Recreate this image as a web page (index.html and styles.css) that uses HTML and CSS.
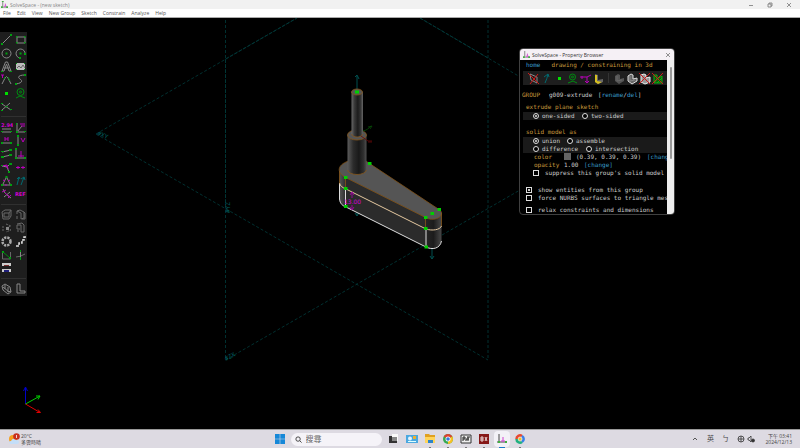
FILE: index.html
```html
<!DOCTYPE html>
<html lang="zh-Hant">
<head>
<meta charset="utf-8">
<title>SolveSpace - (new sketch)</title>
<link rel="stylesheet" href="styles.css">
</head>
<body>
<header class="titlebar">
  <svg class="logo" viewBox="0 0 8 8"><path d="M2 0v6.500M1 7h6" stroke="#777"/><path d="M5 3v3M3.500 6h3" stroke="#d040d0"/><path d="M0 6h2v2H0zM6 6h2v2H6zM1 0h2v1H1z" fill="#40b040"/></svg>
  <span class="caption">SolveSpace - (new sketch)</span>
  <div class="winbtns">
    <button aria-label="Minimize"><svg viewBox="0 0 6 6"><path d="M1 3.500h4"/></svg></button>
    <button aria-label="Restore"><svg viewBox="0 0 6 6"><path d="M1 2h3v3H1zM2 2V1h3v3H4"/></svg></button>
    <button aria-label="Close"><svg viewBox="0 0 6 6"><path d="M1 1l4 4M5 1L1 5"/></svg></button>
  </div>
</header>
<nav class="menubar">
  <button>File</button><button>Edit</button><button>View</button><button>New Group</button><button>Sketch</button><button>Constrain</button><button>Analyze</button><button>Help</button>
</nav>

<main class="workspace">
  <svg class="model" viewBox="0 18 800 411" preserveAspectRatio="xMinYMin meet">
    <defs>
      <linearGradient id="rod"><stop offset="0" stop-color="#686868"/><stop offset=".25" stop-color="#3a3a3a"/><stop offset=".55" stop-color="#1c1c1c"/><stop offset=".8" stop-color="#353535"/><stop offset="1" stop-color="#666"/></linearGradient>
      <linearGradient id="post"><stop offset="0" stop-color="#5c5c5c"/><stop offset=".3" stop-color="#2c2c2c"/><stop offset=".6" stop-color="#191919"/><stop offset=".85" stop-color="#303030"/><stop offset="1" stop-color="#505050"/></linearGradient>
      <linearGradient id="end"><stop offset="0" stop-color="#262626"/><stop offset=".5" stop-color="#1c1c1c"/><stop offset="1" stop-color="#484848"/></linearGradient>
      <linearGradient id="heel"><stop offset="0" stop-color="#555"/><stop offset="1" stop-color="#2c2c2c"/></linearGradient>
    </defs>
    <g class="plane">
      <path d="M96 134L297 18M96 134L488 360M225.500 360L617 134M420 18L617 134M225.500 20V360M488 20V360"/>
      <path class="dense" d="M225.500 59V205M225.500 59L297 18M420 18L488 58"/>
    </g>
    <g class="planename">
      <text x="97" y="135" transform="rotate(22 97 135)">#XY</text>
      <text x="230" y="213" transform="rotate(-90 230 213)">#YZ</text>
      <text x="226" y="361" transform="rotate(-28 226 361)">#ZX</text>
    </g>
    <g class="normal"><path d="M357 90V76M355 77l2-2 2 4M357 205v11M355 213l2 3 2-3M432 247v12M430 256l2 3 2-3"/></g>
    <path fill="url(#heel)" d="M339.500 170V199C340 204 343 206 346 207V177Z"/>
    <path fill="#2b2b2b" d="M345.500 177L426 217V247L345.500 207Z"/>
    <path fill="url(#end)" d="M425.500 216L441.500 212V241C440 249 432 250 425.500 247Z"/>
    <path fill="#555" stroke="#805014" stroke-width=".8" d="M345.500 177.500C337 173 337 166 346 162C354 158 364 159 369.500 163.500L439 209.500C443 212 442 216 438 218C434 220 429 219.500 425.500 217.500Z"/>
    <path class="edge" d="M339.500 171V184M345.500 178V188M425.500 218V229M441.500 213V226"/>
    <path class="sel" d="M339.500 184V199C340 204 343 206 346 207L426 247C432 250 440 249 441.500 241M345.500 189V206M426 229V247"/>
    <path class="mid" d="M339.500 183C340 186 343 188 346 189L426 229C432 231 440 230 441.500 226"/>
    <path fill="url(#post)" d="M347.500 135V170C349 176 365 176 366.500 170V135Z"/>
    <path class="edge" d="M347.500 170C349 176 365 176 366.500 170"/>
    <ellipse cx="357" cy="135" rx="9.500" ry="5" fill="#555" stroke="#87571b" stroke-width=".8"/>
    <path fill="url(#rod)" d="M351.500 92V134C353 138 361 138 363 134V92Z"/>
    <path class="edge" d="M351.500 134C353 138 361 138 363 134"/>
    <ellipse cx="357" cy="92" rx="5.500" ry="3" fill="#555" stroke="#87571b" stroke-width=".8"/>
    <path d="M363 131c4-1 5-2 8-5M368 127l4-1-2 3" fill="none" stroke="#064d06" stroke-width=".8"/>
    <path d="M361 136l7 5h4M368 142h4" fill="none" stroke="#680808" stroke-width=".8"/>
    <g class="dim"><path d="M352 198v-6M350 195l2-3 2 3M352 205v5M350 207l2 3 2-3"/><text x="344" y="204">13.00</text></g>
    <path class="point" d="M355 90.500h4v3h-4zM368 162h3.500v3H368zM344 176h3.500v3H344zM344 187h3.500v3H344zM344 205h3.500v3H344zM437.500 208h3.500v3h-3.500zM430.500 212h3.500v3h-3.500zM424 216h3.500v3H424zM424 227h3.500v3H424zM424.500 245.500h3.500v3h-3.500z"/>
    <g class="axes">
      <path stroke="#0000c8" d="M25.500 404V388M23.500 391l2-4 2 4"/>
      <path stroke="#00d000" d="M25.500 404L40 396M36 396l4 0-2 3.500"/>
      <path stroke="#e00000" d="M25.500 404L40 412.500M38 409.500l2.500 3h-4"/>
    </g>
  </svg>

  <aside class="toolbar">
    <div class="tools six">
      <button aria-label="Line"><svg viewBox="0 0 13 13"><path class="w" d="M2 11L11 2"/><path class="gf" d="M1 10h2v2H1zM10 1h2v2h-2z"/></svg></button>
      <button aria-label="Rectangle"><svg viewBox="0 0 13 13"><path class="w" d="M3 4h8v6H3z"/><path class="gf" d="M2 3h1.500v1.500H2zM10 3h1.500v1.500H10zM2 9h1.500v1.500H2zM10 9h1.500v1.500H10z"/></svg></button>
      <button aria-label="Circle"><svg viewBox="0 0 13 13"><circle class="w" cx="6.500" cy="6.500" r="4.500"/><path class="gf" d="M5.500 5.500h2v2h-2z"/></svg></button>
      <button aria-label="Arc"><svg viewBox="0 0 13 13"><path class="w" d="M6.500 11A4.500 4.500 0 1 1 11 7"/><path class="gf" d="M5.500 5.500h2v2h-2zM10 6h2v2h-2zM5 10h2v2H5z"/></svg></button>
      <button aria-label="Text"><svg viewBox="0 0 13 13"><path class="w" d="M2 11L5.500 2h2L11 11H9L6.500 4 4 11zM4 8h5"/><path class="gf" d="M1 11h2v1H1zM10 11h2v1h-2z"/></svg></button>
      <button aria-label="Image"><svg viewBox="0 0 13 13"><path fill="#bbb" d="M2 3h9v7H2z"/><path d="M3 8l2-2 2 2 2-3 2 3" fill="none" stroke="#666"/><path class="gf" d="M2 3h1v1H2zM10 3h1v1h-1zM2 9h1v1H2zM10 9h1v1h-1z"/></svg></button>
      <button aria-label="Tangent arc"><svg viewBox="0 0 13 13"><path class="w" d="M2 11L5 5q1.500-3 3 0l3 6"/><path class="g" d="M4 6l1-2M8 4l2 4"/><path class="m" d="M1 2h3M2.500 2v3"/></svg></button>
      <button aria-label="Bezier"><svg viewBox="0 0 13 13"><path class="w" d="M11 2C5 2 3 4 6 6s2 4-4 5"/><path class="gf" d="M10 1h2v2h-2zM1 10h2v2H1z"/></svg></button>
      <button aria-label="Point"><svg viewBox="0 0 13 13"><path fill="#00e000" d="M5 5h3v3H5z"/></svg></button>
      <button aria-label="Construction"><svg viewBox="0 0 13 13"><circle class="g" cx="6.500" cy="5" r="3.500"/><circle class="g" cx="6.500" cy="5" r="1"/><path class="g" d="M2 11l4-2 5 2"/></svg></button>
      <button aria-label="Split"><svg viewBox="0 0 13 13"><path class="w" d="M2 4l9 6M2 10l8-7"/><path class="gf" d="M1 3h2v1H1zM1 10h2v1H1zM10 9h2v1h-2zM5.500 6h2v1h-2z"/></svg></button>
    </div>
    <hr>
    <div class="tools six">
      <button aria-label="Distance"><svg viewBox="0 0 13 13"><text x="1" y="6">2.94</text><path class="w" d="M2 8h9M2 11h9"/><path class="gf" d="M1 10h2v1H1zM10 10h2v1h-2z"/></svg></button>
      <button aria-label="Angle"><svg viewBox="0 0 13 13"><path class="w" d="M3 2v9h8M3 11l5-6"/><path class="m" d="M6 3h5M7 5h4"/><path class="gf" d="M2 2h1v2H2zM2 10h2v2H2zM10 10h2v1h-2z"/></svg></button>
      <button aria-label="Horizontal"><svg viewBox="0 0 13 13"><path class="w" d="M2 9h9"/><path class="m" d="M5 3v4M8 3v4M5 5h3"/><path class="gf" d="M1 8h2v2H1zM10 8h2v2h-2z"/></svg></button>
      <button aria-label="Vertical"><svg viewBox="0 0 13 13"><path class="w" d="M4 2v9"/><path class="m" d="M7 4l2 4 2-4"/><path class="gf" d="M3 1h2v2H3zM3 10h2v2H3z"/></svg></button>
      <button aria-label="Parallel"><svg viewBox="0 0 13 13"><path class="w" d="M2 5l9-2M2 10l9-2"/><path class="gf" d="M1 4h3v1H1zM9 2h3v2H9zM1 9h3v2H1zM9 7h3v2H9z"/></svg></button>
      <button aria-label="Perpendicular"><svg viewBox="0 0 13 13"><path class="w" d="M2 1v10h9"/><path class="m" d="M7 4v6M4 9h6"/><path class="gf" d="M1 1h2v2H1zM1 10h2v2H1zM10 10h2v2h-2z"/></svg></button>
      <button aria-label="Point on line"><svg viewBox="0 0 13 13"><path class="w" d="M2 5l5 1 4-4M7 6l2 5"/><path class="m" d="M2 5l5-1 1 4M5 4l3 3"/><path class="gf" d="M9 2h3v2H9zM8 10h2v2H8zM1 4h2v1H1z"/></svg></button>
      <button aria-label="Symmetric"><svg viewBox="0 0 13 13"><path class="m" d="M2 6.500h4M7 6.500h4M4 5v3M9 5v3"/></svg></button>
      <button aria-label="Equal"><svg viewBox="0 0 13 13"><path class="w" d="M6.500 3l4 8h-8z"/><path class="m" d="M3 6l2 1M8 7l2-1M6 10v2"/><path class="gf" d="M5.500 2h2v2h-2zM1 10h2v2H1zM10 10h2v2h-2z"/></svg></button>
      <button aria-label="Orientation"><svg viewBox="0 0 13 13"><path class="t" d="M3 11l2-8-2 2M5 3l1 2M7 11l3-8-3 2M10 3l1 3"/></svg></button>
      <button aria-label="Other side"><svg viewBox="0 0 13 13"><path class="w" d="M3 2l2 4M4 10l6-5M7 8l4 3"/><path class="m" d="M2 5l4-2M5 6l5 4M8 11l3-3"/></svg></button>
      <button aria-label="Reference"><svg viewBox="0 0 13 13"><text x="1" y="9">REF</text></svg></button>
    </div>
    <hr>
    <div class="tools five">
      <button aria-label="Extrude"><svg viewBox="0 0 13 13"><path class="d" d="M2 4l3-2h6v6l-2 3H3zM4 5h5v4H4zM9 5l2-3"/></svg></button>
      <button aria-label="Lathe"><svg viewBox="0 0 13 13"><path class="d" d="M3 3l3-1 4 2v6l-3 1V5L3 3v3M3 8v3M10 4l1 1v6H8"/></svg></button>
      <button aria-label="Helix"><svg viewBox="0 0 13 13"><path class="d" d="M6 3l5 2-5 2 5 2-5 2M2 6h3M2 9h2" stroke-dasharray="2 1"/><path fill="#888" d="M6 6h3v3H6z"/></svg></button>
      <button aria-label="Revolve"><svg viewBox="0 0 13 13"><path class="d" d="M3 3l5-1 2 2v7H7V4H3v4h3M3 10h2"/></svg></button>
      <button aria-label="Step rotating"><svg viewBox="0 0 13 13"><circle cx="6.500" cy="6.500" r="4" fill="none" stroke="#aaa" stroke-width="2.500" stroke-dasharray="2.200 1"/></svg></button>
      <button aria-label="Step translating"><svg viewBox="0 0 13 13"><path d="M2 11h3V8h3V5h2V2h2" fill="none" stroke="#ddd" stroke-width="1.500" stroke-dasharray="3 1"/></svg></button>
      <button aria-label="Sketch in plane"><svg viewBox="0 0 13 13"><path class="d" d="M2.500 3v8h8V4"/><path class="g" d="M3 4l7 6"/><path class="gf" d="M2 3h2v2H2zM9 9h2v2H9z"/></svg></button>
      <button aria-label="Sketch in 3D"><svg viewBox="0 0 13 13"><path class="d" d="M2 9q4 0 9-3"/><path class="w" d="M6.500 2v9"/><path class="gf" d="M6 2h1v2H6zM6 9h1v3H6z"/></svg></button>
      <button aria-label="Assemble"><svg viewBox="0 0 13 13"><path fill="#ccc" d="M2 2h9v3H2zM2 8h9v3H2z"/><path fill="#7a3030" d="M4 4h5v1H4z"/><path fill="#20207a" d="M4 9h5v2H4z"/></svg></button>
    </div>
    <hr>
    <div class="tools one">
      <button aria-label="Nearest isometric"><svg viewBox="0 0 13 13"><path class="w" d="M2 4l3-2 5 3 1 5-3 2-5-4zM3 5l6 5M5 3v4M8 5v5l3-1"/></svg></button>
      <button aria-label="Nearest orthographic"><svg viewBox="0 0 13 13"><path class="w" d="M3 2h3v7h5v2H3z"/></svg></button>
    </div>
  </aside>

  <section class="browser">
    <div class="browser-title">
      <svg class="logo" viewBox="0 0 8 8"><path d="M2 0v6.500M1 7h6" stroke="#777"/><path d="M5 3v3M3.500 6h3" stroke="#d040d0"/><path d="M0 6h2v2H0zM6 6h2v2H6z" fill="#40b040"/></svg>
      <span>SolveSpace - Property Browser</span>
      <button aria-label="Close browser"><svg viewBox="0 0 6 6"><path d="M1 1l4 4M5 1L1 5"/></svg></button>
    </div>
    <div class="browser-body">
      <form class="page">
        <div class="row top"><a href="#home">home</a><span class="y">drawing / constraining in 3d</span></div>
        <div class="strip">
          <button type="button" aria-label="Planes"><svg viewBox="0 0 13 13"><path class="w" d="M3 2l7 3v6L4 8z"/><path class="r" d="M1 1l11 11M11 2L3 12"/></svg></button>
          <button type="button" aria-label="Normals"><svg viewBox="0 0 13 13"><path class="t" d="M5 11q2-4 3-9L4 5M8 2l1 3"/></svg></button>
          <button type="button" aria-label="Points"><svg viewBox="0 0 13 13"><path fill="#00e000" d="M5 5h3v3H5z"/></svg></button>
          <button type="button" aria-label="Construction entities"><svg viewBox="0 0 13 13"><circle class="g" cx="6.500" cy="5" r="3"/><circle class="g" cx="6.500" cy="5" r="1"/><path class="g" d="M2 11l5-2 4 2"/></svg></button>
          <button type="button" aria-label="Constraints"><svg viewBox="0 0 13 13"><path class="m" d="M1 5h7l4-2M3 4v3M8 5v6M6 9l2 2 2-2"/></svg></button>
          <button type="button" aria-label="Faces"><svg viewBox="0 0 13 13"><path fill="#666" d="M3 2l3 1v5l5-1v3l-5 2-3-2z"/><path fill="#d8c020" d="M3 3h2v6l5 1-4 2-3-2z"/></svg></button>
          <i></i>
          <button type="button" aria-label="Shaded"><svg viewBox="0 0 13 13"><path fill="#555" d="M3 4l3-2 2 1v4l4-1v3l-5 3-4-3z"/><path class="d" d="M5 4v5l5-1"/></svg></button>
          <button type="button" aria-label="Edges"><svg viewBox="0 0 13 13"><path fill="#666" stroke="#ddd" d="M3 4l3-2 2 1v4l4-1v3l-5 3-4-3z"/><path class="w" d="M5 4v5l5-1"/></svg></button>
          <button type="button" aria-label="Outlines"><svg viewBox="0 0 13 13"><path fill="#999" stroke="#eee" d="M3 3l3-1 2 1v3l4-1v5l-5 2-4-2z"/><path class="r" d="M1 1l11 11M12 1L1 12"/></svg></button>
          <button type="button" aria-label="Mesh"><svg viewBox="0 0 13 13"><path fill="#0a5a0a" stroke="#10b010" d="M3 3h3v4l5-3v7H3zM3 11l4-5M6 11l5-5"/><path class="r" d="M1 1l11 11M12 1L1 12"/></svg></button>
        </div>
        <div class="row group"><span class="y key">GROUP</span><span class="name">g009-extrude</span><span>[<a href="#rename">rename</a>/<a href="#del">del</a>]</span></div>
        <div class="row head first">extrude plane sketch</div>
        <div class="row band sides"><label><input type="radio" name="sides" checked>one-sided</label><label><input type="radio" name="sides">two-sided</label></div>
        <div class="row head">solid model as</div>
        <div class="row band short"><label><input type="radio" name="op" checked>union</label><label><input type="radio" name="op">assemble</label></div>
        <div class="row band long"><label><input type="radio" name="op">difference</label><label><input type="radio" name="op">intersection</label></div>
        <div class="row prop"><span class="y">color</span><b class="swatch"></b><span class="rgb">(0.39, 0.39, 0.39)</span><a href="#color">[change]</a></div>
        <div class="row prop"><span class="y">opacity</span><span class="num">1.00</span><a href="#opacity">[change]</a></div>
        <div class="row check inner"><label><input type="checkbox">suppress this group's solid model</label></div>
        <div class="row check spaced"><label><input type="checkbox" checked>show entities from this group</label></div>
        <div class="row check"><label><input type="checkbox">force NURBS surfaces to triangle mesh</label></div>
        <div class="row check last"><label><input type="checkbox">relax constraints and dimensions</label></div>
      </form>
      <div class="scroll"><div class="thumb"></div></div>
    </div>
  </section>
</main>

<footer class="taskbar">
  <div class="weather">
    <svg viewBox="0 0 12 12"><circle cx="5" cy="6" r="4" fill="#f5a020"/><path d="M2 11q-2-3 1-3 2-4 5-1 3 0 3 2t-2 2z" fill="#c4def8"/><circle cx="8.500" cy="3.500" r="3.300" fill="#c83020"/><path d="M8.500 2v3" stroke="#fff" stroke-width=".8"/></svg>
    <div class="lines"><span>20°C</span><span>多雲時晴</span></div>
  </div>
  <div class="dock">
    <button class="start" aria-label="Start"><svg viewBox="0 0 10 10"><path fill="#1688d8" d="M0 0h4.700v4.700H0zM5.300 0H10v4.700H5.300zM0 5.300h4.700V10H0zM5.300 5.300H10V10H5.300z"/></svg></button>
    <label class="search"><svg viewBox="0 0 8 8"><circle cx="3.500" cy="3.500" r="2.500"/><path d="M5.500 5.500l2 2"/></svg><input type="text" placeholder="搜尋" aria-label="搜尋"></label>
    <button aria-label="Task view"><svg viewBox="0 0 12 12"><path fill="#fafafa" d="M4 1h6v7H4z"/><path fill="#333" d="M1 3h3v5h5v2H1z"/><path fill="#888" d="M4 4h5v4H4z"/></svg></button>
    <button aria-label="Widgets"><svg viewBox="0 0 12 12"><path fill="#4ba8e0" d="M0 2h12v8H0z"/><circle cx="4" cy="5.500" r="2" fill="#e4f4ff"/><path fill="#f0b030" d="M7 3h3v3H7z"/><path fill="#dff" d="M2 8h8v1H2z"/></svg></button>
    <button class="run" aria-label="Files"><svg viewBox="0 0 12 12"><path fill="#e0a020" d="M1 1h4l1 1h5v8H1z"/><path fill="#ffd45a" d="M1 4h10v6H1z"/><path fill="#2b83c8" d="M4 7h5v3H4z"/></svg></button>
    <button class="run" aria-label="Chrome"><svg viewBox="0 0 12 12"><circle cx="6" cy="6" r="5" fill="#36a852"/><path fill="#e04030" d="M6 6L1.700 3.500A5 5 0 0 1 10.300 3.500z"/><path fill="#f8c020" d="M6 6l4.300-2.500A5 5 0 0 1 6 11z"/><circle cx="6" cy="6" r="2.500" fill="#fff"/><circle cx="6" cy="6" r="1.800" fill="#3878e0"/></svg></button>
    <button class="run" aria-label="Editor"><svg viewBox="0 0 12 12"><path fill="#eee" stroke="#333" d="M1 2h10v8H1z"/><path d="M3 8V4h2v2H3M6 8V6h3M8 4v4M7 4h3" fill="none" stroke="#222"/></svg></button>
    <button class="run" aria-label="Recorder"><svg viewBox="0 0 12 12"><path fill="#861818" d="M1 1h10v10H1z"/><path d="M3 4v4M3 4h2v4H3M3 6h2M7 4l2 4M9 4L7 8" fill="none" stroke="#fff" stroke-width=".8"/></svg></button>
    <button class="run active" aria-label="SolveSpace"><svg viewBox="0 0 12 12"><path d="M3 1v9M1 9h10" stroke="#444"/><path d="M7 4v4M5 8h4" stroke="#d040d0"/><path fill="#40b040" d="M2 8h2v2H2zM9 8h2v2H9z"/></svg></button>
    <button class="run" aria-label="Browser"><svg viewBox="0 0 12 12"><g fill="none" stroke-width="2.500"><path stroke="#e84830" d="M2.500 6A3.500 3.500 0 0 1 8 3"/><path stroke="#3880e8" d="M8 3a3.500 3.500 0 0 1 0 6"/><path stroke="#20b080" d="M8 9a3.500 3.500 0 0 1-5.500-3"/></g><circle cx="6" cy="6" r="1.500" fill="#f8c020"/></svg></button>
  </div>
  <div class="tray">
    <svg viewBox="0 0 8 8"><path d="M2 5l2-2 2 2"/></svg>
    <span class="ime">英</span><span class="ime">ㄅ</span>
    <div class="net"><svg viewBox="0 0 8 8"><circle cx="4" cy="4" r="3"/><path d="M1 4h6M4 1v6"/></svg>
    <svg viewBox="0 0 8 8"><path d="M1 3h1l2-2v6L2 5H1z"/><circle cx="6" cy="5.500" r="1.500" fill="#333"/></svg></div>
    <div class="lines clock"><span>下午 03:41</span><span>2024/12/13</span></div>
  </div>
</footer>
</body>
</html>
```

FILE: styles.css
```css
* { box-sizing: border-box; }
body {
  margin: 0;
  height: 100vh;
  display: flex;
  flex-direction: column;
  overflow: hidden;
  background: #000;
  font: 5px/6px "Open Sans", "Noto Sans CJK TC", sans-serif;
}
button {
  margin: 0;
  padding: 0;
  border: 0;
  background: none;
  color: inherit;
  font: inherit;
}
svg { display: block; }
a { color: #3a9ccb; text-decoration: none; }

/* Main window frame */
.titlebar {
  display: flex;
  align-items: center;
  height: 9px;
  padding: 0 8px 0 1px;
  gap: 2px;
  background: #f1f1f1;
  color: #868686;
}
.logo { width: 7px; height: 7px; }
.winbtns { display: flex; gap: 13px; margin-left: auto; }
.winbtns svg, .browser-title button svg {
  width: 6px;
  height: 6px;
  fill: none;
  stroke: #777;
  stroke-width: 0.8;
}
.menubar {
  display: flex;
  align-items: center;
  gap: 6px;
  height: 9px;
  padding-left: 3px;
  background: #fff;
  border-bottom: 1px solid #aaa;
  color: #555;
}
.workspace { position: relative; flex: 1; min-height: 0; }

/* Drawing area */
.model { position: absolute; left: 0; top: 0; width: 100%; }
.plane path { fill: none; stroke: #003c3c; stroke-width: 0.8; stroke-dasharray: 3 2; }
.plane .dense { stroke: #003838; stroke-dasharray: 4 1; }
.planename { fill: #006060; font: 6px "DejaVu Sans Mono", monospace; }
.normal path { fill: none; stroke: #005050; }
.edge { fill: none; stroke: #87571b; stroke-width: 0.8; }
.sel { fill: none; stroke: #ddd; }
.mid { fill: none; stroke: #e4c8a0; }
.dim path { fill: none; stroke: #b000b0; stroke-width: 0.8; }
.dim text { fill: #d800d8; font: 6px "DejaVu Sans", sans-serif; }
.point { fill: #00d000; }
.axes path { fill: none; stroke-width: 1; }

/* Tool palette */
.toolbar {
  position: relative;
  display: flex;
  flex-direction: column;
  width: 27px;
  height: 264px;
  margin-top: 14px;
  padding: 1px 0;
  background: #1e1e1e;
}
.toolbar hr {
  width: 25px;
  height: 1px;
  margin: 3px 1px;
  border: 0;
  background: #303030;
}
.tools { display: grid; grid-template-columns: 1fr 1fr; grid-auto-rows: 1fr; }
.six { flex: 6; }
.five { flex: 5; }
.one { flex: 1; }
.tools button { display: flex; align-items: center; justify-content: center; min-height: 0; }
.tools svg, .strip svg { width: 13px; height: 13px; }
.tools text { fill: #d000d0; font: bold 5px "DejaVu Sans", sans-serif; }
.w, .d, .g, .m, .t, .r { fill: none; }
.w { stroke: #888; }
.d { stroke: #686868; }
.g { stroke: #008c10; }
.m { stroke: #b800b8; }
.t { stroke: #006a70; }
.r { stroke: #d01818; }
.gf { fill: #00a010; }

/* Property browser */
.browser {
  position: absolute;
  left: 519px;
  top: 30px;
  width: 156px;
  height: 167px;
  display: flex;
  flex-direction: column;
  overflow: hidden;
  border: 1px solid #404040;
  border-radius: 4px;
  background: #000;
}
.browser-title {
  display: flex;
  flex: none;
  align-items: center;
  gap: 2px;
  height: 11px;
  padding: 0 3px;
  background: #f5f0f5;
  color: #333;
}
.browser-title button { margin-left: auto; }
.browser-body { display: flex; flex: 1; min-height: 0; }
.page {
  flex: 1;
  min-width: 0;
  overflow: hidden;
  color: #ccc;
  font: 6px/8px "DejaVu Sans Mono", monospace;
  white-space: nowrap;
}
.scroll { width: 7px; padding: 7px 2px 0 3px; background: #eee; }
.thumb { height: 92px; background: #999; border-radius: 1px; }
.row { display: flex; height: 8px; }
.y, .head { color: #c99a3d; }
.top { height: 11px; gap: 11px; padding: 1px 0 0 6px; }
.strip {
  display: flex;
  align-items: center;
  height: 14px;
  margin-left: 3px;
  padding-left: 4px;
  background: #1e1e1e;
}
.strip button { width: 13px; flex: none; }
.strip i { width: 1px; height: 10px; margin: 0 3px; background: #333; }
.group { margin-top: 6px; padding-left: 2px; }
.key { width: 27px; }
.name { width: 49px; }
.head { margin-top: 8px; padding-left: 6px; height: 9px; }
.head.first { margin-top: 4px; }
.band { margin-left: 3px; padding-left: 10px; background: #1a1a1a; }
label { display: flex; align-items: center; }
.sides label:first-child { width: 49px; }
.short label:first-child { width: 34px; }
.long label:first-child { width: 53px; }
.page input {
  appearance: none;
  flex: none;
  width: 6px;
  height: 6px;
  margin: 0 3px 0 0;
  border: 1px solid #ddd;
  background: #000;
}
.page input[type="radio"] { border-radius: 50%; }
.page input[type="radio"]:checked { background: #ddd; background-clip: content-box; padding: 1px; }
.page input[type="checkbox"] { margin-right: 6px; }
.page input[type="checkbox"]:checked { background: #ccc; background-clip: content-box; padding: 1px; }
.prop { padding-left: 14px; }
.prop .y { width: 30px; flex: none; }
.swatch { flex: none; width: 7px; height: 7px; margin-right: 5px; background: #646464; }
.rgb { flex: none; width: 71px; }
.num { width: 20px; }
.check { padding-left: 6px; }
.inner { padding-left: 13px; }
.spaced { margin-top: 9px; }
.last { margin-top: 4px; }

/* Taskbar */
.taskbar {
  display: grid;
  grid-template-columns: 1fr auto 1fr;
  align-items: center;
  height: 19px;
  padding: 0 8px;
  background: #dddae2;
  border-top: 1px solid #999;
  color: #444;
}
.weather, .dock, .tray, .net { display: flex; align-items: center; }
.weather { gap: 1px; }
.weather svg { width: 12px; height: 12px; }
.lines { display: flex; flex-direction: column; }
.dock { gap: 6px; }
.dock button { position: relative; }
.dock svg { width: 12px; height: 12px; }
.dock .start svg { width: 10px; height: 10px; }
.search {
  gap: 4px;
  width: 91px;
  height: 13px;
  padding: 0 4px;
  background: #f5f3f8;
  border-radius: 7px;
}
.dock .search svg { width: 7px; height: 7px; flex: none; fill: none; stroke: #333; }
.search input {
  flex: 1;
  min-width: 0;
  padding: 0;
  border: 0;
  background: none;
  font: 8px/12px "Noto Sans CJK TC", sans-serif;
}
.search input::placeholder { color: #666; opacity: 1; }
.dock .active { background: #f3f1f7; border-radius: 2px; box-shadow: 0 0 0 2px #f3f1f7; }
.run::after {
  content: "";
  position: absolute;
  left: 5px;
  bottom: -3px;
  width: 2px;
  height: 1px;
  background: #777;
}
.active::after { left: 3px; width: 6px; background: #1a78c8; }
.tray { justify-content: flex-end; gap: 8px; }
.tray svg { width: 8px; height: 8px; fill: none; stroke: #333; stroke-width: 0.8; }
.ime { font-size: 7px; line-height: 8px; }
.net { gap: 2px; margin-right: 1px; }
.clock { align-items: flex-end; width: 28px; }
```
